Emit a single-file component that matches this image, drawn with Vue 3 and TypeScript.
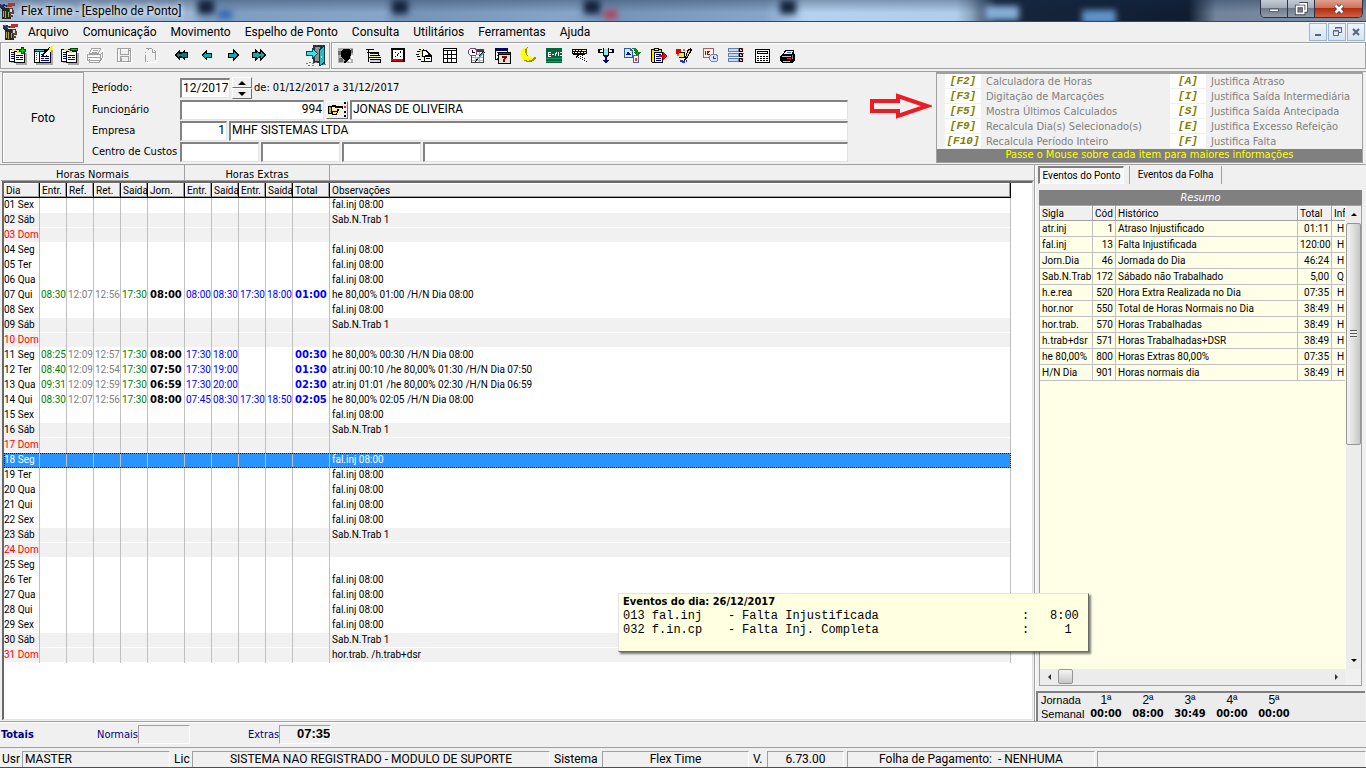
<script setup lang="ts">
import { ref } from 'vue'

interface Shape { d: string; f?: string; s?: string; w?: number }
interface Tool { name: string; shapes: Shape[]; gap?: string; off?: boolean }

const menu: string[] = ['Arquivo', 'Comunicação', 'Movimento', 'Espelho de Ponto', 'Consulta', 'Utilitários', 'Ferramentas', 'Ajuda']

const K = '#000'
const W = '#fff'
const T = '#00b0b0'
const D = '#000080'
const G = '#a0a0a0'

const pages: Shape[] = [
  { d: 'M4 6h11v12H4zM9 8h11v12H9z', f: '#a8a8a8' },
  { d: 'M2 4h11v13H2z', f: K }, { d: 'M3 5h9v11H3z', f: W },
  { d: 'M4 7h5v1H4zM4 9h3v1H4zM4 11h3v1H4zM4 13h3v1H4z', f: D },
  { d: 'M7 6h11v12H7z', f: K }, { d: 'M8 7h9v10H8z', f: W },
  { d: 'M9 10h7v1H9zM9 12h3v1H9zM13 12h3v1h-3zM9 14h7v1H9z', f: D },
  { d: 'M5 4h4v2H5zM10 5h3v3h-3z', f: '#e8e050' },
]
const calendar = (x: number, y: number, w: number, h: number, c: string): Shape[] => [
  { d: `M${x} ${y}h${w}v${h}h${-w}z`, f: c },
  { d: `M${x + 1} ${y + 3}h${w - 2}v${h - 4}h${2 - w}z`, f: W },
]

const fileTools: Tool[] = [
  { name: 'Incluir', shapes: [...pages, { d: 'M12 4h7v3h-7zM14 2h3v7h-3z', f: '#004000' }, { d: 'M13 5h5v1h-5zM15 3h1v5h-1z', f: '#00e000' }] },
  { name: 'Alterar', shapes: [
    { d: 'M3 5h17v15H3z', f: '#a8a8a8' }, { d: 'M1 4h17v14H1z', f: K }, { d: 'M2 7h4v10H2zM7 7h10v10H7z', f: W },
    { d: 'M2 5h9v1H2z', f: '#00d0e0' }, { d: 'M3 8h1v1H3zM3 10h1v1H3zM3 12h1v1H3zM3 14h1v1H3z', f: '#e00000' },
    { d: 'M8 9h2v1H8zM8 11h8v1H8zM8 13h3v1H8zM12 13h4v1h-4zM8 15h8v1H8z', f: D },
    { d: 'M9 12l1-4 7-6 3 1-6 8z', f: K }, { d: 'M11 9l5-4 2 1-4 4-3 1z', f: W }, { d: 'M15 4l3-3h2v2l-3 3z', f: '#ffee20' } ] },
  { name: 'Excluir', shapes: [...pages, { d: 'M11 3h8v3h-8z', f: '#004000' }, { d: 'M12 4h6v1h-6z', f: '#00d000' }] },
  { name: 'Imprimir', off: true, shapes: [
    { d: 'M7 4h8l-2 5H5zM2 9h14l2-2v6l-2 3H3l-1-1zM3 12h13M5 14h9M16 9v7M8 6h4M7 8h4', s: W, w: 2 },
    { d: 'M6.500 3.500h9l-2 5h-9zM2.500 9.500h13l2-2v5l-2 3h-13zM2.500 12.500h13M4.500 14v3.500h10v-2M15.500 9v6M8 5.500h5M7 7.500h5', s: G } ] },
  { name: 'Salvar', gap: 'g3', off: true, shapes: [
    { d: 'M4.500 4.500h13v13h-13z', s: W }, { d: 'M3.500 3.500h13v13h-13zM6 4v5.500h8.500V4M6 16v-4.500h8.500V16M7.500 13v3M15 5.500h1', s: G } ] },
  { name: 'Documento', off: true, shapes: [{ d: 'M6 17h10V8', s: W }, { d: 'M5.500 10v6.500M5.500 8V7M5.500 3.500h6M12.500 4v3.500h3.500M14 5l2 2M15.500 8v7M8 3v2M7 16.500h1', s: G }] },
  { name: 'Primeiro', gap: 'g5', shapes: [{ d: 'M3 10l6-6v3h2l3-3v3h3v6h-3v3l-3-3H9v3z', f: K }, { d: 'M5 10l3-3v2h2l1-1h5v4h-5l-1-1H8v2z', f: '#008080' }] },
  { name: 'Anterior', shapes: [{ d: 'M4 10l6-6v4h5v5h-5v3z', f: K }, { d: 'M6 10l3-3v2h5v3H9v2z', f: T }] },
  { name: 'Próximo', shapes: [{ d: 'M16 10l-6-6v4H5v5h5v3z', f: K }, { d: 'M14 10l-3-3v2H6v3h5v2z', f: T }] },
  { name: 'Último', shapes: [{ d: 'M17 10l-6-6v3H9L6 4v3H3v6h3v3l3-3h2v3z', f: K }, { d: 'M15 10l-3-3v2h-2L8 7v1H4v4h4v1l2-2h2v2z', f: T }] },
  { name: 'Sair', gap: 'door', shapes: [
    { d: 'M7 0h12v18H7z', f: '#303030' }, { d: 'M9 2h5v14H9z', f: '#909090' },
    { d: 'M13 4l6-4v19l-6 2z', f: '#004048' }, { d: 'M14 5l4-3v15l-4 3z', f: '#30b8c0' }, { d: 'M15 11h1v2h-1z', f: '#ffff60' },
    { d: 'M0 6h6V3l6 6-6 5v-3H0z', f: '#005060' }, { d: 'M1 7h6V5l4 4-4 3v-2H1z', f: '#40e0e8' },
    { d: 'M0 18h2v1H0zM3 17h2v1H3zM6 18h2v1H6zM9 17h2v1H9zM2 20h2v1H2zM6 20h2v1H6zM17 19h3v1h-3z', f: '#808080' } ] },
]

const workTools: Tool[] = [
  { name: 'Foto', shapes: [
    { d: 'M2 3h15v15H2z', f: '#b0b0b0' }, { d: 'M2 6h3v4H2zM15 4h2v4h-2zM3 13h4v4H3z', f: '#707070' },
    { d: 'M7 4h6l2 2v4l-1 3-2 3h-1l-1 2H8l1-3-3-2-1-3V6z', f: K }, { d: 'M11 16l3-3 1 4zM15 10h2v4h-2z', f: W } ] },
  { name: 'Estrutura', shapes: [
    { d: 'M4 4h8v1H4zM6 5h1v12H6zM5 7h12v1H5zM8 10h10v1H8zM16 7h1v3h-1zM7 12h12v1H7zM8 14h11v1H8zM8 17h11v1H8zM18 14h1v4h-1z', f: K }, { d: 'M8 8h8v1H8z', f: D },
    { d: 'M8 9h8v1H8z', f: W }, { d: 'M8 11h8v1H8z', f: '#ffff40' }, { d: 'M8 15h10v2H8z', f: '#d0d0ff' } ] },
  { name: 'Relógio', shapes: [
    { d: 'M3 3h14v14H3z', f: K }, { d: 'M3 14h12v2H3z', f: '#e00000' }, { d: 'M3 5h1v10H3z', f: '#e00000' }, { d: 'M5 5h10v9H5z', f: W },
    { d: 'M9 9h1v2H9zM10 8h1v1h-1zM12 6h1v2h-1zM7 7h1v1H7zM12 11h1v1h-1zM7 11h1v1H7z', f: K } ] },
  { name: 'Marcações', shapes: [
    { d: 'M5 4h2v1H5zM3 6h3v1H3zM2 9h3v1H2zM3 11h3v1H3zM4 14h3v1H4zM7 16h3v1H7zM9 4h1v2H9z', f: K },
    { d: 'M6 5h2v2H6zM5 8h3v1H5zM7 10h2v2H7z', f: '#e8e000' }, { d: 'M8 5h5l2 3h1l2 3v6h-8v-5H8V8z', f: K }, { d: 'M9 6h3l2 3v1h-3v1H9zM11 12h6v4h-6z', f: W }, { d: 'M12 13h4v1h-4z', f: K } ] },
  { name: 'Tabela', shapes: [{ d: 'M3 3h14v15H3z', f: K }, { d: 'M4 4h12v1H4zM4 6h3v3H4zM8 6h3v3H8zM12 6h4v3h-4zM4 10h3v3H4zM8 10h3v3H8zM12 10h4v3h-4zM4 14h3v3H4zM8 14h3v3H8zM12 14h4v3h-4z', f: W }] },
  { name: 'Horários', shapes: [
    ...calendar(5, 4, 13, 14, '#404040'), { d: 'M6 9h11v1H6zM6 12h11v1H6zM6 15h11v1H6zM9 7h1v10H9zM13 7h1v10h-1z', f: '#b0b0b0' },
    { d: 'M4 3h5l2 2v4l-2 2H4L2 9V5z', f: '#804080' }, { d: 'M4 4h5l1 2v3l-1 1H4L3 8V5z', f: W }, { d: 'M6 5h1v2h2v1H6z', f: K },
    { d: 'M10 15l7-9 2 1-8 9-2 1z', f: K }, { d: 'M11 14l6-7 1 1-6 7z', f: '#40b0c0' } ] },
  { name: 'Calendário', shapes: [
    ...calendar(3, 3, 13, 12, '#000060'), { d: 'M5 7h1v1H5zM5 10h1v1H5zM5 13h1v1H5z', f: '#c00000' },
    { d: 'M6 7h13v12H6z', f: K }, { d: 'M7 8h11v1H7z', f: '#2040e0' }, { d: 'M7 10h11v8H7z', f: '#e8e0d0' },
    { d: 'M10 11h5v2h-1v1h-1v3h-2v-3h1v-1h-2z', f: '#900000' } ] },
  { name: 'Noturno', shapes: [
    { d: 'M9 2C3 2 1 8 3 12s9 8 15 2v-2c-5 1-9 0-9-5 0-2 0-3 1-5z', f: '#a09000' },
    { d: 'M8 2C3 3 1 8 3 12s9 6 14 0c-5 1-9-1-10-5 0-2 0-3 2-5z', f: '#ffff00' } ] },
  { name: 'Exportar', shapes: [
    { d: 'M2 3h16v15H2z', f: '#006838' }, { d: 'M2 13h16v1H2zM2 16h16v1H2z', f: '#28906c' },
    { d: 'M4 7h3v1H5v1h2v1H5v1h2v1H4zM8 9h2v1H8zM11 8h1v3h-1zM12 7h1v2h-1zM14 7h1v4h-1zM16 7h2v1h-2zM16 10h2v1h-2z', f: W } ] },
  { name: 'Digitação', shapes: [
    { d: 'M2 4h15v5l-4 1-2 1-5 2-1-1 3-2H3L2 8z', f: K }, { d: 'M3 5h2v1H3zM6 5h2v1H6zM9 5h2v1H9zM12 5h4v1h-4zM3 7h1v1H3zM5 7h2v1H5zM8 7h2v1H8zM11 7h2v1h-2zM14 7h2v1h-2z', f: '#fff8b0' },
    { d: 'M8 10h9v8h-4l-5-4z', f: W }, { d: 'M8 10h1v1H8zM10 11h1v1h-1zM12 10h1v1h-1zM12 12h1v1h-1zM10 13h1v1h-1zM14 13h1v1h-1zM12 14h1v1h-1zM14 15h1v1h-1zM16 16h1v1h-1zM8 12h1v1H8z', f: K } ] },
  { name: 'Coletar', shapes: [
    { d: 'M2 4h2v4H2zM4 7h3v1H4zM2 4h4v1H2zM16 4h2v4h-2zM13 7h3v1h-3zM14 4h4v1h-4zM7 3h1v8H7zM12 3h1v8h-1zM8 10h4v2H8z', f: K },
    { d: 'M8 4h4v6H8z', f: '#80f0f0' }, { d: 'M9 11h2v4h2l-3 4-3-4h2z', f: D } ] },
  { name: 'Converter', shapes: [
    { d: 'M2 3h6l3 3v7H2z', f: '#2858b0' }, { d: 'M3 4h5v2h2v6H3z', f: '#d8e8ff' }, { d: 'M4 10l2-4 3 4z', f: '#002080' },
    { d: 'M10 3c4-1 6 1 6 4h3l-4 4-4-4h2c0-2-1-3-3-3z', f: '#188018' }, { d: 'M11 10h6v8h-6z', f: '#5060a0' }, { d: 'M12 11h4v6h-4z', f: W }, { d: 'M13 13h2v3h-2z', f: '#f04030' } ] },
  { name: 'Justificar', shapes: [
    { d: 'M3 4h11v14H4l-1-1z', f: K }, { d: 'M4 5h9v12H4z', f: '#ffe800' }, { d: 'M6 7h9v11H6z', f: K }, { d: 'M7 8h7v9H7z', f: W }, { d: 'M6 3h5v3H6z', f: K }, { d: 'M7 4h3v1H7z', f: W },
    { d: 'M8 9h5v1H8zM8 11h3v1H8zM8 13h5v1H8zM8 15h5v1H8z', f: D }, { d: 'M11 10h4V7l4 4-4 4v-3h-4z', f: '#ee0000' } ] },
  { name: 'Cores', shapes: [
    { d: 'M2 4h5v5H2z', f: '#e00000' }, { d: 'M5 7h6v6H5z', f: K }, { d: 'M5 8h5v4H5z', f: '#ffe820' }, { d: 'M9 4h2v2H9zM3 9h2v2H3z', f: '#f06040' },
    { d: 'M11 13l3-9 3-1 1 2-5 9-3 2z', f: K }, { d: 'M12 12l3-7 1 1-3 6z', f: '#f0d040' }, { d: 'M6 15h3v1h2v2h-3v-1H6zM12 15h1v2h-1z', f: '#1830e0' } ] },
  { name: 'Agenda', shapes: [
    { d: 'M3 3h11v10H3z', f: '#b06050' }, { d: 'M4 4h9v8H4z', f: '#fff0e8' }, { d: 'M5 6h1v4H5zM7 6h3v1H9v1H8v1h2v1H7z', f: '#801818' },
    { d: 'M11 9h5l2 2v4l-2 2h-5l-2-2v-4z', f: '#7080b8' }, { d: 'M11 10h5l1 2v3l-1 1h-5l-1-2v-3z', f: '#d8e4ff' }, { d: 'M13 11h1v2h2v1h-3z', f: '#404080' } ] },
  { name: 'Opções', shapes: [
    { d: 'M2 3h11v4H2zM2 8h11v4H2zM2 13h11v4H2z', f: '#6080b0' }, { d: 'M3 4h9v2H3zM3 9h9v2H3zM3 14h9v2H3z', f: '#c8d8f0' },
    { d: 'M13 3h4v4h-4zM13 8h4v4h-4zM13 13h4v4h-4z', f: K }, { d: 'M14 4h2v2h-2zM14 14h2v2h-2zM14 9h2v2h-2z', f: '#f0c0b0' },
    { d: 'M15 4h1v1h-1zM16 3h1v1h-1zM15 9h1v1h-1zM16 8h2v1h-2zM15 14h1v1h-1zM16 13h1v1h-1z', f: '#d02010' } ] },
  { name: 'Calculadora', shapes: [
    { d: 'M3 4h15v14H3z', f: K }, { d: 'M4 5h13v12H4z', f: W }, { d: 'M5 6h11v3H5z', f: K }, { d: 'M6 7h9v1H6z', f: W },
    { d: 'M5 11h2v1H5zM8 11h2v1H8zM11 11h2v1h-2zM14 11h2v1h-2zM5 13h2v1H5zM8 13h2v1H8zM11 13h2v1h-2zM14 13h2v1h-2zM5 15h2v1H5zM8 15h2v1H8zM11 15h2v1h-2zM14 15h2v1h-2z', f: K } ] },
  { name: 'Impressora', shapes: [
    { d: 'M7 5h9v4H5z', f: K }, { d: 'M8 6h7l-1 3H6z', f: '#f0f8ff' }, { d: 'M9 7h4v1H9z', f: '#3060e0' },
    { d: 'M4 9h13v6l-3 3H4l-2-2v-5z', f: K }, { d: 'M4 11h9v1H4zM5 16h7v1H5z', f: '#c0c0c0' }, { d: 'M9 13h4v1H9z', f: '#ff2020' }, { d: 'M14 10h1v4h-1z', f: '#808080' } ] },
]

const trash: Shape[] = [
  { d: 'M0 1h5v1h4v2H5v1H0z', f: '#283060' }, { d: 'M8 0h7v3h-3v1H7z', f: '#b83030' }, { d: 'M1 1h2v1H1zM4 3h2v1H4z', f: '#6878b0' },
  { d: 'M1 5h12v1H1zM2 6h9v10H2z', f: '#282818' }, { d: 'M3 8h1v6H3zM5 8h1v7H5zM8 9h1v5H8z', f: '#a8a860' },
  { d: 'M9 5h3l2 3-1 6h-3z', f: '#504848' }, { d: 'M10 6h2v3h-2zM11 11h3v1h-3z', f: '#e0d8d0' },
]

interface Day { d: string; t?: string[]; o?: string }
const f = 'fal.inj 08:00'
const s = 'Sab.N.Trab 1'
const days: Day[] = [
  { d: '01 Sex', o: f }, { d: '02 Sáb', o: s }, { d: '03 Dom' }, { d: '04 Seg', o: f }, { d: '05 Ter', o: f }, { d: '06 Qua', o: f },
  { d: '07 Qui', t: ['08:30', '12:07', '12:56', '17:30', '08:00', '08:00', '08:30', '17:30', '18:00', '01:00'], o: 'he 80,00% 01:00 /H/N Dia 08:00' },
  { d: '08 Sex', o: f }, { d: '09 Sáb', o: s }, { d: '10 Dom' },
  { d: '11 Seg', t: ['08:25', '12:09', '12:57', '17:30', '08:00', '17:30', '18:00', '', '', '00:30'], o: 'he 80,00% 00:30 /H/N Dia 08:00' },
  { d: '12 Ter', t: ['08:40', '12:09', '12:54', '17:30', '07:50', '17:30', '19:00', '', '', '01:30'], o: 'atr.inj 00:10 /he 80,00% 01:30 /H/N Dia 07:50' },
  { d: '13 Qua', t: ['09:31', '12:09', '12:59', '17:30', '06:59', '17:30', '20:00', '', '', '02:30'], o: 'atr.inj 01:01 /he 80,00% 02:30 /H/N Dia 06:59' },
  { d: '14 Qui', t: ['08:30', '12:07', '12:56', '17:30', '08:00', '07:45', '08:30', '17:30', '18:50', '02:05'], o: 'he 80,00% 02:05 /H/N Dia 08:00' },
  { d: '15 Sex', o: f }, { d: '16 Sáb', o: s }, { d: '17 Dom' }, { d: '18 Seg', o: f }, { d: '19 Ter', o: f }, { d: '20 Qua', o: f },
  { d: '21 Qui', o: f }, { d: '22 Sex', o: f }, { d: '23 Sáb', o: s }, { d: '24 Dom' }, { d: '25 Seg' }, { d: '26 Ter', o: f },
  { d: '27 Qua', o: f }, { d: '28 Qui', o: f }, { d: '29 Sex', o: f }, { d: '30 Sáb', o: s }, { d: '31 Dom', o: 'hor.trab. /h.trab+dsr' },
]
const heads: string[] = ['Dia', 'Entr.', 'Ref.', 'Ret.', 'Saída', 'Jorn.', 'Entr.', 'Saída', 'Entr.', 'Saída', 'Total', 'Observações']
const tones: string[] = ['green', 'gray', 'gray', 'green', 'work', 'blue', 'blue', 'blue', 'blue', 'extra']
const selected = ref('18 Seg')
const rowClass = (d: string) => ({ sun: d.endsWith('Dom'), off: d.endsWith('Dom') || d.endsWith('Sáb'), sel: d === selected.value })

const summary: string[][] = [
  ['atr.inj', '1', 'Atraso Injustificado', '01:11', 'H'], ['fal.inj', '13', 'Falta Injustificada', '120:00', 'H'],
  ['Jorn.Dia', '46', 'Jornada do Dia', '46:24', 'H'], ['Sab.N.Trab', '172', 'Sábado não Trabalhado', '5,00', 'Q'],
  ['h.e.rea', '520', 'Hora Extra Realizada no Dia', '07:35', 'H'], ['hor.nor', '550', 'Total de Horas Normais no Dia', '38:49', 'H'],
  ['hor.trab.', '570', 'Horas Trabalhadas', '38:49', 'H'], ['h.trab+dsr', '571', 'Horas Trabalhadas+DSR', '38:49', 'H'],
  ['he 80,00%', '800', 'Horas Extras 80,00%', '07:35', 'H'], ['H/N Dia', '901', 'Horas normais dia', '38:49', 'H'],
]
const hints: string[][] = [
  ['[F2]', 'Calculadora de Horas', '[A]', 'Justifica Atraso'], ['[F3]', 'Digitação de Marcações', '[I]', 'Justifica Saída Intermediária'],
  ['[F5]', 'Mostra Últimos Calculados', '[S]', 'Justifica Saída Antecipada'], ['[F9]', 'Recalcula Dia(s) Selecionado(s)', '[E]', 'Justifica Excesso Refeição'],
  ['[F10]', 'Recalcula Período Inteiro', '[F]', 'Justifica Falta'],
]
const weeks: string[][] = [['1ª', '00:00'], ['2ª', '08:00'], ['3ª', '30:49'], ['4ª', '00:00'], ['5ª', '00:00']]
const tab = ref(0)
</script>

<template>
  <div class="app">
    <header class="title">
      <div class="glass" aria-hidden="true"><i class="b1"></i><i class="b2"></i><i class="b3"></i><i class="b4"></i><i class="b5"></i><i class="b6"></i><i class="b7"></i><i class="b8"></i></div>
      <svg class="logo" viewBox="0 0 16 16" shape-rendering="crispEdges"><path v-for="(p, i) in trash" :key="i" :d="p.d" :fill="p.f" /></svg>
      <h1>Flex Time - [Espelho de Ponto]</h1>
      <div class="winbtns">
        <button type="button" aria-label="Minimizar"><svg viewBox="0 0 16 16"><path d="M3 8h10v3H3z" fill="#fff" stroke="#445" /></svg></button>
        <button type="button" aria-label="Restaurar"><svg viewBox="0 0 16 16" fill="none"><path d="M6 2h8v8h-2M3 5h8v8H3z" stroke="#445" stroke-width="4" /><path d="M6 2h8v8h-2M3 5h8v8H3z" stroke="#fff" stroke-width="2" /></svg></button>
        <button type="button" class="close" aria-label="Fechar"><svg viewBox="0 0 16 16"><path d="M4 4l8 8M12 4l-8 8" stroke="#534" stroke-width="5" /><path d="M4 4l8 8M12 4l-8 8" stroke="#fff" stroke-width="3" /></svg></button>
      </div>
    </header>

    <nav class="menu">
      <svg class="logo" viewBox="0 0 16 16" shape-rendering="crispEdges"><path v-for="(p, i) in trash" :key="i" :d="p.d" :fill="p.f" /></svg>
      <button v-for="m in menu" :key="m" type="button">{{ m }}</button>
      <div class="mdi">
        <button type="button" aria-label="Minimizar janela"><svg viewBox="0 0 16 16"><path d="M5 10h6v2H5z" fill="#55667a" /></svg></button>
        <button type="button" aria-label="Restaurar janela"><svg viewBox="0 0 16 16" fill="none" stroke="#55667a"><path d="M6.500 5V3.500h6v5H10M6 4h7" /><path d="M4.500 6.500h5v5h-5zM4 7h6" /></svg></button>
        <button type="button" aria-label="Fechar janela"><svg viewBox="0 0 16 16"><path d="M5 5l6 6M11 5l-6 6" stroke="#55667a" stroke-width="2" /></svg></button>
      </div>
    </nav>

    <div class="toolbars">
      <div v-for="(bar, b) in [fileTools, workTools]" :key="b" class="toolbar" :class="{ grow: b === 1 }">
        <button v-for="t in bar" :key="t.name" type="button" :class="t.gap" :aria-label="t.name" :disabled="t.off">
          <svg viewBox="0 0 20 20" shape-rendering="crispEdges"><path v-for="(p, i) in t.shapes" :key="i" :d="p.d" :fill="p.f ?? 'none'" :stroke="p.s ?? 'none'" :stroke-width="p.w ?? 1" /></svg>
        </button>
      </div>
    </div>

    <section class="head">
      <div class="foto">Foto</div>
      <form class="fields" @submit.prevent>
        <label for="per"><u>P</u>eríodo:</label>
        <div class="line">
          <input id="per" class="w50" value="12/2017">
          <span class="spin"><button type="button" aria-label="Aumentar"><i class="up"></i></button><button type="button" aria-label="Diminuir"><i class="down"></i></button></span>
          <span class="range">de: 01/12/2017 a 31/12/2017</span>
        </div>
        <label for="fun">Funcio<u>n</u>ário</label>
        <div class="line">
          <input id="fun" class="w144 right" value="994">
          <button type="button" class="pick" aria-label="Escolher funcionário">
            <svg viewBox="0 0 20 16" shape-rendering="crispEdges"><path d="M1 4h4V3h4v1h7v3h-4v2h-1v2h-1v2H5v-1H1z" fill="#000" /><path d="M5 5h3v1h7v1h-5v1H8v1H5z" fill="#fff8c0" /><path d="M5 8h5v1H5zM6 10h4v1H6zM6 12h3v-1H6z" fill="#ffe060" /><path d="M2 5h2v6H2z" fill="#c0b040" /><path d="M17 0h2v2h-2zM17 9h2v2h-2zM17 13h2v2h-2z" fill="#000" /><path d="M17 4h2v2h-2z" fill="#e02020" /></svg>
          </button>
          <input class="grow" aria-label="Nome do funcionário" value="JONAS DE OLIVEIRA">
        </div>
        <label for="emp">Empresa</label>
        <div class="line">
          <input id="emp" class="w48 right" value="1">
          <input class="grow" aria-label="Nome da empresa" value="MHF SISTEMAS LTDA">
        </div>
        <label for="cc">Centro de Custos</label>
        <div class="line">
          <input id="cc" class="w80"><input class="w80" aria-label="Centro de custos 2"><input class="w80" aria-label="Centro de custos 3"><input class="grow" aria-label="Descrição do centro de custos">
        </div>
      </form>
      <svg class="arrow" viewBox="0 0 64 26"><path d="M4 8h26V3l29 10-29 10v-5H4z" fill="none" stroke="#ed1c24" stroke-width="4" /></svg>
      <aside class="hints">
        <div class="keys">
          <template v-for="h in hints" :key="h[0]"><kbd>{{ h[0] }}</kbd><span>{{ h[1] }}</span><kbd>{{ h[2] }}</kbd><span>{{ h[3] }}</span></template>
        </div>
        <p>Passe o Mouse sobre cada item para maiores informações</p>
      </aside>
    </section>

    <main class="body">
      <section class="sheet">
        <div class="groups"><span class="ga">Horas Normais</span><span class="gb">Horas Extras</span><span class="gc"></span></div>
        <div class="gridbox">
          <table class="days">
            <colgroup><col class="c36"><col v-for="n in 4" :key="n" class="c27"><col class="c37"><col v-for="n in 4" :key="'x' + n" class="c27"><col class="c37"><col></colgroup>
            <thead><tr><th v-for="(h, i) in heads" :key="i">{{ h }}</th></tr></thead>
            <tbody>
              <tr v-for="r in days" :key="r.d" :class="rowClass(r.d)" @click="selected = r.d">
                <td class="day">{{ r.d }}</td>
                <td v-for="(c, i) in tones" :key="i" :class="c">{{ r.t ? r.t[i] : '' }}</td>
                <td>{{ r.o }}</td>
              </tr>
            </tbody>
          </table>
        </div>
      </section>

      <aside class="side">
        <div class="tabs" role="tablist">
          <button type="button" role="tab" :class="{ on: tab === 0 }" @click="tab = 0">Eventos do Ponto</button>
          <button type="button" role="tab" :class="{ on: tab === 1 }" @click="tab = 1">Eventos da Folha</button>
        </div>
        <h2>Resumo</h2>
        <div class="sumbox">
          <div class="sumview">
            <table class="sum">
              <colgroup><col class="s53"><col class="s23"><col><col class="s34"><col class="s13"></colgroup>
              <thead><tr><th>Sigla</th><th>Cód</th><th>Histórico</th><th>Total</th><th>Inf</th></tr></thead>
              <tbody><tr v-for="r in summary" :key="r[1]"><td v-for="(c, i) in r" :key="i">{{ c }}</td></tr></tbody>
            </table>
          </div>
          <div class="vbar"><button type="button" aria-label="Subir"><i class="up"></i></button><div class="vthumb"><i></i></div><button type="button" class="last" aria-label="Descer"><i class="down"></i></button></div>
          <div class="hbar"><button type="button" aria-label="Esquerda"><i class="lt"></i></button><div class="hthumb"></div><button type="button" class="last" aria-label="Direita"><i class="rt"></i></button></div>
        </div>
        <div class="week">
          <div class="wk0"><span>Jornada</span><span>Semanal</span></div>
          <div v-for="w in weeks" :key="w[0]" class="wk"><span>{{ w[0] }}</span><b>{{ w[1] }}</b></div>
        </div>
      </aside>
    </main>

    <section class="totals">
      <strong>Totais</strong>
      <label for="tn">Normais</label><input id="tn" readonly>
      <label for="te" class="ex">Extras</label><input id="te" readonly value="07:35">
    </section>

    <footer class="status">
      <span class="k0">Usr</span><span class="v v0">MASTER</span>
      <span class="k1">Lic</span><span class="v v1">SISTEMA NAO REGISTRADO - MODULO DE SUPORTE</span>
      <span class="k2">Sistema</span><span class="v v2">Flex Time</span>
      <span class="k3">V.</span><span class="v v3">6.73.00</span>
      <span class="v v4">Folha de Pagamento:&nbsp; - NENHUMA</span><span class="v v5"></span>
    </footer>

    <div class="tip" role="tooltip">
      <b>Eventos do dia: 26/12/2017</b>
      <div><span>013 fal.inj</span><span>-</span><span>Falta Injustificada</span><span>:</span><span>8:00</span></div>
      <div><span>032 f.in.cp</span><span>-</span><span>Falta Inj. Completa</span><span>:</span><span>&nbsp; 1</span></div>
    </div>
  </div>
</template>

<style>
body { margin: 0; background: #f0f0f0; }
</style>

<style scoped>
* { box-sizing: border-box; }
.app { position: relative; display: flex; flex-direction: column; height: 100vh; min-height: 740px; overflow: hidden; background: #f0f0f0; color: #000; font: 11px/14px "DejaVu Sans Condensed", "DejaVu Sans", sans-serif; }
button { font: inherit; color: inherit; background: none; border: 0; padding: 0; margin: 0; }
input { font: 12px/16px Roboto, sans-serif; color: #000; min-width: 0; margin: 0; }
i { display: block; }

.title { position: relative; display: flex; align-items: center; height: 22px; flex: none; border-bottom: 1px solid #3a4658; overflow: hidden; background: linear-gradient(180deg, rgba(20, 40, 70, .35), rgba(255, 255, 255, 0) 60%), linear-gradient(90deg, #a5bedb 0, #9bb5d3 14%, #7d9cbf 15%, #86a5c8 28%, #7492b5 29%, #86a5c8 42%, #7492b5 44%, #86a5c8 56%, #b5d1ef 59%, #b0cdec 70%, #8fa9c4 71%, #17263e 73%, #101d30 87%, #71849c 89%, #7f90a4 100%); }
.glass { position: absolute; inset: 0; filter: blur(3px); }
.glass i { position: absolute; top: 0; height: 14px; width: 16px; background: #14233c; }
.glass .b1 { left: 198px; } .glass .b2 { left: 392px; } .glass .b3 { left: 584px; } .glass .b4 { left: 780px; }
.glass .b5 { left: 985px; top: 6px; width: 34px; background: #86b0d8; }
.glass .b6 { left: 1082px; top: 10px; width: 34px; background: #6094cc; }
.glass .b7 { left: 604px; top: 10px; width: 13px; height: 9px; background: #b04060; }
.glass .b8 { left: 218px; top: 10px; width: 14px; height: 9px; background: #3468b0; }
.logo { width: 16px; height: 16px; flex: none; }
.title .logo, h1 { position: relative; }
h1 { margin: 0 0 0 5px; font: 12px/20px Roboto, sans-serif; text-shadow: 0 0 6px #fff, 0 0 6px #fff; }
.winbtns { position: relative; display: flex; margin-left: auto; margin-right: 3px; align-self: flex-start; height: 18px; border: 1px solid #2b3443; border-top: 0; border-radius: 0 0 5px 5px; overflow: hidden; }
.winbtns button { width: 27px; display: grid; place-items: center; border-right: 1px solid #2b3443; background: linear-gradient(#c3ccd6, #a3adb9 45%, #6f7b8a 50%, #909caa); }
.winbtns .close { width: 47px; border: 0; background: linear-gradient(#e0a090, #d07058 45%, #b02c10 50%, #d06040); }
.winbtns svg { width: 14px; height: 14px; }

.menu { display: flex; align-items: center; height: 20px; flex: none; padding: 0 1px 0 3px; font: 12px/18px Roboto, sans-serif; }
.menu > button { margin-left: 14px; }
.menu > .logo + button { margin-left: 9px; }
.mdi { display: flex; gap: 1px; margin-left: auto; }
.mdi button { width: 18px; height: 18px; border: 1px solid #9fb5cc; background: linear-gradient(#eef4fb, #d6e4f2); display: grid; place-items: center; }
.mdi svg { width: 16px; height: 16px; }

.toolbars { display: flex; flex: none; gap: 1px; height: 27px; }
.toolbar { display: flex; align-items: flex-start; width: 330px; border: 1px solid #a0a0a0; box-shadow: inset 1px 1px #fff; padding-left: 3px; }
.toolbar.grow { width: auto; flex: 1; padding-left: 1px; }
.toolbar button { width: 26px; height: 24px; display: grid; place-items: center; flex: none; }
.toolbar svg { width: 20px; height: 20px; overflow: visible; }
.toolbar .g3 { margin-left: 3px; }
.toolbar .g5 { margin-left: 5px; }
.toolbar .door { margin-left: auto; }

.head { display: flex; flex: none; height: 94px; margin-top: 2px; border-top: 1px solid #a0a0a0; border-bottom: 1px solid #a0a0a0; }
.foto { width: 82px; margin: 0 0 1px 2px; border: 1px solid #a0a0a0; box-shadow: inset 1px 1px #fff; display: grid; place-items: center; font: 12px/14px Roboto, sans-serif; }
.fields { flex: 1; display: grid; grid-template-columns: 88px 1fr; grid-template-rows: 22px 21px 21px 21px; align-items: center; margin: 5px 0 0 8px; }
.line { display: flex; gap: 2px; align-items: center; }
.line input { height: 20px; border: 1px solid #e3e3e3; border-top: 2px solid #828282; border-left: 2px solid #828282; background: #fff; padding: 0 1px 2px; }
.line .grow { flex: 1; }
.right { text-align: right; }
.w50 { width: 50px; } .w144 { width: 144px; } .w48 { width: 47px; } .w80 { width: 79px; }
.spin { width: 20px; height: 22px; display: grid; grid-template-rows: 1fr 1fr; }
.spin button { display: grid; place-items: center; }
.spin button, .pick { border: 1px solid #fff; border-right-color: #707070; border-bottom-color: #707070; background: #f0f0f0; }
.pick { width: 22px; height: 18px; display: grid; place-items: center; }
.pick svg { width: 20px; height: 16px; }
.up, .down { width: 0; height: 0; border: 4px solid transparent; }
.up { border-top: 0; border-bottom-color: #000; }
.down { border-bottom: 0; border-top-color: #000; }
.arrow { width: 64px; height: 26px; margin: 21px 4px 0 20px; flex: none; }
.hints { width: 427px; margin: 0 3px 1px 0; border: 1px solid #a0a0a0; border-top-width: 2px; display: flex; flex-direction: column; color: #808080; }
.keys { display: grid; grid-template-columns: 36px 189px 36px 1fr; grid-auto-rows: 15px; padding-left: 8px; flex: 1; }
.keys kbd { height: 14px; background: #fff; color: #808000; text-align: center; font: italic bold 11px/14px "Liberation Mono", monospace; }
.keys span { padding-left: 5px; white-space: nowrap; line-height: 15px; }
.hints p { margin: 0; height: 13px; line-height: 12px; background: #808080; color: #ff0; text-align: center; }

.body { display: flex; flex: 1; min-height: 0; }
.sheet { flex: 1; display: flex; flex-direction: column; border-right: 1px solid #a0a0a0; min-width: 0; padding-left: 1px; }
.groups { display: flex; height: 16px; flex: none; text-align: center; line-height: 19px; border-bottom: 1px solid #a0a0a0; }
.ga { width: 184px; border-right: 1px solid #a0a0a0; } .gb { width: 145px; border-right: 1px solid #a0a0a0; } .gc { flex: 1; }
.gridbox { flex: 1; margin: 0 1px 1px 1px; border: 1px solid #e3e3e3; border-left: 2px solid #696969; border-top: 2px solid #696969; background: #fff; padding-right: 21px; min-height: 0; overflow: hidden; }
table { border-collapse: separate; border-spacing: 0; table-layout: fixed; width: 100%; }
th, td { padding: 0; white-space: nowrap; overflow: hidden; text-align: left; font-weight: normal; }
.c36 { width: 36px; } .c27 { width: 27px; } .c37 { width: 37px; }
.days, .sum { font: 10px/13px Roboto, sans-serif; }
.days th { height: 15px; background: #f0f0f0; border-right: 1px solid #000; border-bottom: 1px solid #000; box-shadow: inset -1px -1px #a0a0a0, inset 1px 1px #fff; padding-left: 2px; }
.days td { height: 15px; border-right: 1px solid #c0c0c0; padding-left: 2px; vertical-align: top; }
.days td.day { padding-left: 0; }
.off td { background: #f1f1f1; box-shadow: inset 0 -1px #fff; }
.sun .day { color: #f00; }
.green { color: #008000; } .gray { color: #808080; } .blue { color: #00f; }
.days .green, .days .gray, .days .blue { padding-left: 1px; }
.work, .extra { font: bold 10px/13px "DejaVu Sans", sans-serif; }
.extra { color: #00f; }
.sel td { background: #2993ff; color: #fff; }
.sel { outline: 1px dotted #000; outline-offset: -1px; }

.side { width: 331px; display: flex; flex-direction: column; border-left: 1px solid #fff; }
.tabs { display: flex; height: 20px; flex: none; padding: 1px 0 0 2px; font: 10px/14px Roboto, sans-serif; }
.tabs button { width: 92px; height: 18px; border-right: 1px solid #a0a0a0; }
.tabs .on { width: 86px; margin-right: 6px; border: 1px solid #fff; border-top: 2px solid #808080; border-left: 2px solid #808080; background: #f8f8f8; box-shadow: 5px 0 #f0f0f0, 6px 0 #a0a0a0; }
h2 { margin: 5px 4px 0 3px; height: 15px; flex: none; background: #808080; color: #fff; font: italic 11px/15px "DejaVu Sans Condensed", sans-serif; text-align: center; }
.sumbox { flex: 1; margin: 0 4px 5px 3px; border: 1px solid #a0a0a0; display: grid; grid-template-columns: 1fr 16px; grid-template-rows: 1fr 16px; min-height: 0; }
.sumview { background: #ffffe8; overflow: hidden; }
.s53 { width: 53px; } .s23 { width: 23px; } .s34 { width: 34px; } .s13 { width: 13px; }
.sum th { height: 15px; background: #f0f0f0; border-right: 1px solid #a0a0a0; border-bottom: 1px solid #a0a0a0; box-shadow: inset 1px 1px #fff; padding-left: 2px; }
.sum td { height: 16px; line-height: 15px; border-right: 1px solid #c0c0c0; border-bottom: 1px solid #c0c0c0; padding: 0 2px; vertical-align: top; }
.sum td:nth-child(2), .sum td:nth-child(4) { text-align: right; }
.sum th:last-child, .sum td:last-child { border-right: 0; padding-right: 0; }
.sum td:last-child { padding-left: 5px; }
.vbar { grid-row: 1; grid-column: 2; display: flex; flex-direction: column; background: #ececec; border-left: 1px solid #fff; }
.hbar { display: flex; background: #ececec; }
.vbar button { height: 17px; display: grid; place-items: center; }
.hbar button { width: 18px; display: grid; place-items: center; }
.last { margin-top: auto; }
.hbar .last { margin: 0 0 0 auto; }
.vbar .up, .vbar .down { border-width: 3px; } .vbar .up { border-top: 0; } .vbar .down { border-bottom: 0; }
.vthumb { height: 48%; border: 1px solid #959595; border-radius: 2px; background: linear-gradient(90deg, #f4f4f4, #dedede 50%, #c6c6c6); display: grid; place-items: center; }
.vthumb i { width: 7px; height: 8px; background: repeating-linear-gradient(#555 0 1px, #eee 1px 3px); }
.hthumb { width: 15px; height: 15px; border: 1px solid #959595; border-radius: 2px; background: linear-gradient(#f4f4f4, #dedede 50%, #c6c6c6); }
.lt, .rt { width: 0; height: 0; border: 3px solid transparent; }
.lt { border-left: 0; border-right-color: #333; }
.rt { border-right: 0; border-left-color: #333; }
.week { display: flex; flex: none; height: 30px; margin-right: 1px; border-top: 2px solid #808080; border-left: 2px solid #808080; padding-left: 3px; background: #ececec; }
.wk0 { width: 44px; font: 11px/14px "Liberation Sans", sans-serif; }
.wk { width: 42px; text-align: center; font: 12px/14px "Liberation Sans", sans-serif; }
.wk b { font: bold 11px/14px "DejaVu Sans Condensed", sans-serif; }
.wk span, .wk b, .wk0 span { display: block; height: 14px; }

.totals { display: flex; align-items: center; height: 27px; flex: none; border-top: 1px solid #a0a0a0; border-bottom: 1px solid #a0a0a0; padding-left: 1px; color: #000080; box-shadow: inset 0 1px #fff; }
.totals strong { width: 96px; }
.totals input { width: 52px; height: 19px; border: 1px solid #fff; border-top-color: #a0a0a0; border-left-color: #a0a0a0; background: #f0f0f0; margin-left: 0; padding: 0 0 3px; text-align: right; font: bold 13px/14px "Liberation Sans", sans-serif; }
.totals .ex { margin-left: 58px; }

.status { display: flex; height: 20px; flex: none; padding: 3px 0 0; font: 12px/15px Roboto, sans-serif; border-bottom: 1px solid #3f5168; white-space: nowrap; }
.v { border-top: 1px solid #a0a0a0; border-left: 1px solid #a0a0a0; border-right: 1px solid #fff; text-align: center; overflow: hidden; }
.k0, .k1, .k2, .k3 { padding-top: 1px; }
.k0 { width: 22px; padding-left: 2px; } .v0 { width: 148px; text-align: left; padding-left: 2px; }
.k1 { width: 22px; padding-left: 4px; } .v1 { width: 358px; }
.k2 { width: 52px; padding-left: 4px; } .v2 { width: 147px; }
.k3 { width: 18px; padding-left: 4px; } .v3 { width: 77px; margin-right: 3px; }
.v4 { width: 248px; margin-right: 2px; } .v5 { flex: 1; }

.tip { position: absolute; left: 618px; top: 593px; width: 471px; height: 59px; background: #ffffe1; border: 1px solid #e3e3e3; border-right: 1px solid #696969; border-bottom: 1px solid #696969; box-shadow: 2px 2px 2px rgba(0, 0, 0, .5); padding: 1px 4px; font: 12px/14px "Liberation Mono", monospace; white-space: pre; }
.tip b { display: block; font: bold 11px/14px "DejaVu Sans Condensed", sans-serif; }
.tip div { display: grid; grid-template-columns: 105px 14px 280px 28px 1fr; }
</style>
